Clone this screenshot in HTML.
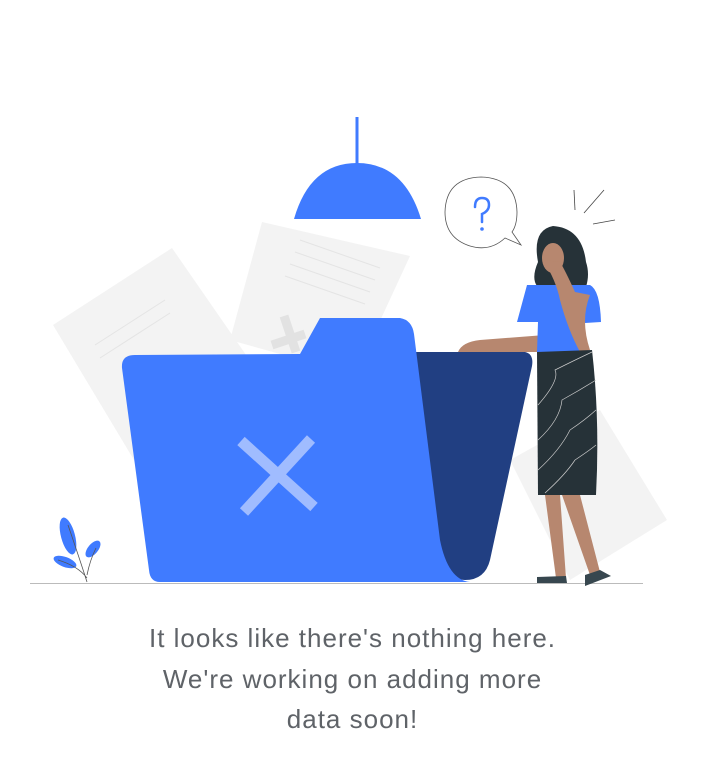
<!DOCTYPE html>
<html><head><meta charset="utf-8"><style>
html,body{margin:0;padding:0;background:#fff;width:720px;height:764px;overflow:hidden}
.t{position:absolute;left:0;width:705px;top:618px;text-align:center;font-family:"Liberation Sans",sans-serif;font-size:26px;line-height:40.5px;color:#5f6368;letter-spacing:1px}
</style></head><body>
<svg width="720" height="764" style="position:absolute;left:0;top:0">
<polygon points="53,325 172,248 262,378 140,470" fill="#f3f3f3"/>
<polygon points="262,222 410,256 355,375 230,340" fill="#f3f3f3"/>
<polygon points="510,460 600,410 667,520 570,580" fill="#f3f3f3"/>
<g stroke="#e4e4e4" stroke-width="1">
<line x1="300" y1="240" x2="380" y2="268"/><line x1="295" y1="252" x2="375" y2="280"/><line x1="290" y1="264" x2="370" y2="292"/><line x1="285" y1="276" x2="365" y2="304"/>
<line x1="95" y1="345" x2="165" y2="300"/><line x1="100" y1="358" x2="170" y2="313"/>
</g>
<g stroke="#e2e2e2" stroke-width="9"><line x1="284" y1="316" x2="296" y2="352"/><line x1="272" y1="345" x2="305" y2="334"/></g>
<line x1="357" y1="117" x2="357" y2="165" stroke="#407bff" stroke-width="3"/>
<path d="M294,219 Q310,163 357,163 Q404,163 421,219 Z" fill="#407bff"/>
<line x1="30" y1="583.5" x2="643" y2="583.5" stroke="#bbb" stroke-width="1"/>
<path d="M410,352 L525,352 Q534,354 532,366 L490,560 Q485,580 465,580 L440,578 Z" fill="#213f82"/>
<path d="M320,318 L400,318 Q412,320 414,334 L440,540 Q448,580 470,582 L160,582 Q150,582 149,570 L122,368 Q121,355 135,355 L300,354 Z" fill="#407bff"/>
<g stroke="#a0bcff" stroke-width="11"><line x1="241" y1="441" x2="314" y2="507"/><line x1="311" y1="439" x2="244" y2="512"/></g>
<g fill="#407bff"><ellipse cx="68" cy="536" rx="7" ry="19" transform="rotate(-15 68 536)"/><ellipse cx="93" cy="549" rx="5" ry="10" transform="rotate(40 93 549)"/><ellipse cx="65" cy="562" rx="12" ry="5" transform="rotate(20 65 562)"/></g>
<path d="M68,525 Q80,560 87,582 M87,575 Q90,560 96,548 M87,578 Q78,566 58,560" stroke="#555" stroke-width="0.8" fill="none"/>
<path d="M505,238 Q490,252 470,246 Q445,238 445,212 Q446,178 481,177 Q516,178 517,212 Q517,225 512,232 L521,245 Z" fill="#fff" stroke="#555" stroke-width="0.8"/>
<path d="M475,207 Q475,198 482,198 Q489,198 489,205 Q489,211 482,214 L482,222" stroke="#407bff" stroke-width="2.5" fill="none" stroke-linecap="round"/>
<circle cx="482" cy="229" r="1.8" fill="#407bff"/>
<g stroke="#444" stroke-width="0.8"><line x1="574" y1="190" x2="575" y2="210"/><line x1="604" y1="190" x2="584" y2="213"/><line x1="593" y1="224" x2="615" y2="220"/></g>
<path d="M480,340 L545,335 L545,352 L458,352 Q462,342 480,340 Z" fill="#b7876f"/>
<path d="M545,495 L556,578 L566,578 L560,495 Z M562,495 L590,575 L600,572 L580,495 Z" fill="#b7876f"/>
<path d="M537,577 L566,576 L567,583 L537,583 Z M585,575 L600,570 L611,576 L585,586 Z" fill="#37474f"/>
<path d="M553,226 Q532,230 538,262 Q528,285 545,292 L580,300 Q592,280 586,262 Q582,228 553,226 Z" fill="#263238"/>
<ellipse cx="553" cy="258" rx="11" ry="15" fill="#b7876f"/>
<path d="M527,285 L590,285 Q600,290 601,322 L585,323 L585,352 L537,352 L538,322 L517,322 Z" fill="#407bff"/>
<path d="M543,260 Q556,280 560,300 Q568,330 580,352 L590,350 Q580,320 590,295 L575,292 Q565,270 560,262 Z" fill="#b7876f"/>
<path d="M537,352 L592,350 Q600,420 596,495 L538,495 Z" fill="#263238"/>
<g stroke="#ccc" stroke-width="0.7" fill="none"><path d="M538,405 Q560,380 555,370 Q575,360 592,352"/><path d="M538,440 Q560,420 562,400 Q580,390 596,380"/><path d="M538,470 Q560,450 570,430 Q585,420 596,410"/><path d="M545,493 Q565,475 575,460 Q590,450 596,445"/></g>
</svg>
<div class="t">It looks like there's nothing here.<br>We're working on adding more<br>data soon!</div>
</body></html>
